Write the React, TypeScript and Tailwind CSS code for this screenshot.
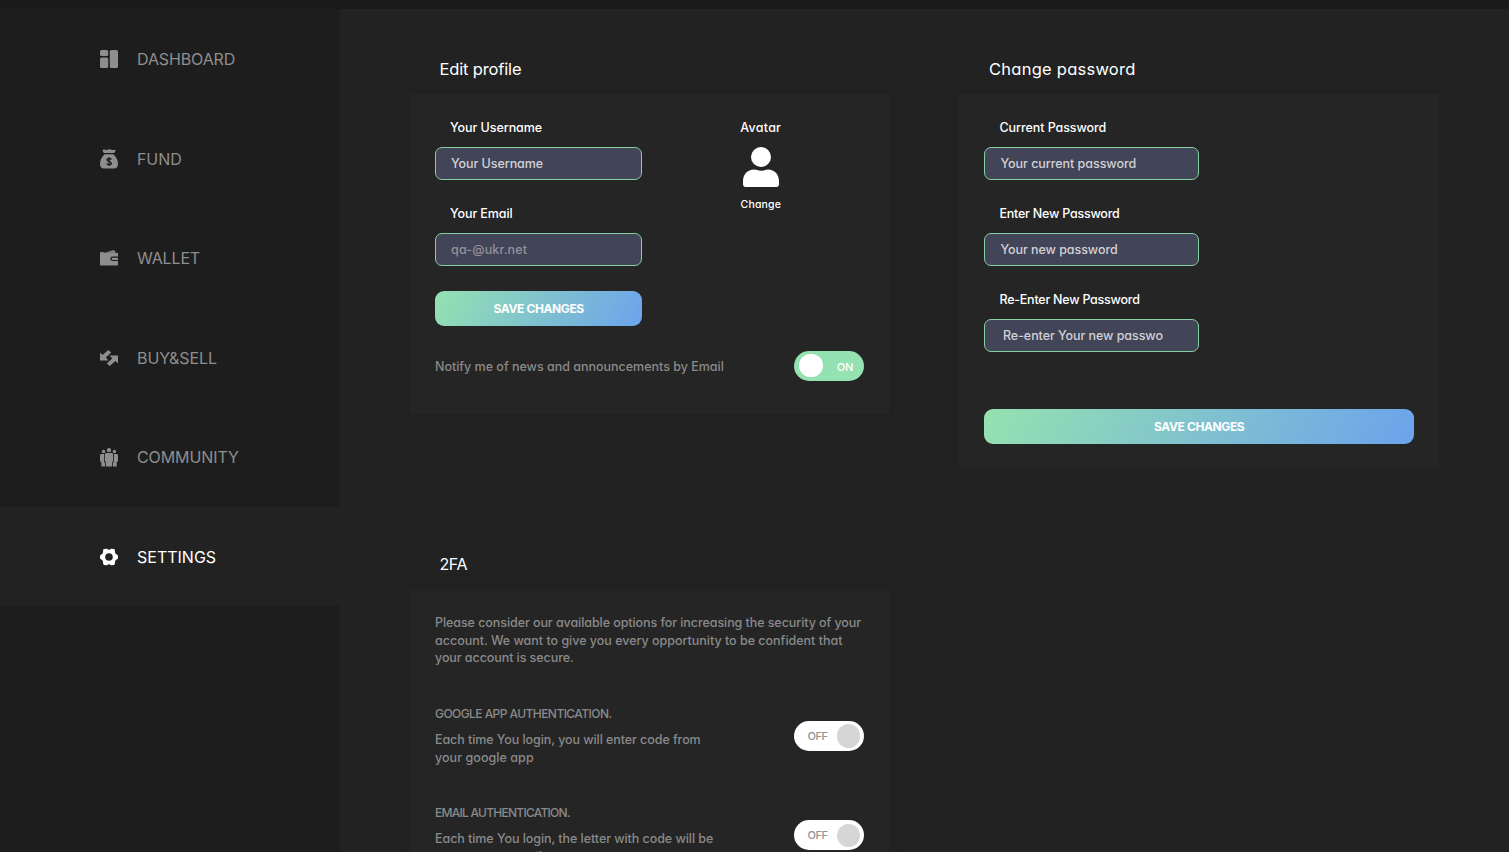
import React from "react";
import clsx from "clsx";

const DashboardIcon = () => (
  <svg width="18" height="18" viewBox="0 0 18 18" fill="currentColor">
    <rect x="0" y="0" width="8.2" height="6" rx="1.6" />
    <rect x="0" y="7.6" width="8.2" height="10.4" rx="1.6" />
    <rect x="9.8" y="0" width="8.2" height="18" rx="1.6" />
  </svg>
);

const FundIcon = () => (
  <svg width="18" height="20" viewBox="0 0 18 20" fill="currentColor">
    <path d="M3.2 0.8C4.5 0 5.6 1.1 6.8.9 8 .6 8.400.3 9.400.3c1 0 1.500.7 2.600.7 1.200 0 2-.6 2.900-.2 1 .5.4 1.500-.1 2.200-.4.6-.7 1-1.500 1H4.700c-.8 0-1.100-.4-1.500-1C2.700 2.300 2.300 1.300 3.200.8z" />
    <path d="M4.600 5.300h8.800C16 7.500 18 11 18 14.800c0 3-1.300 4.800-4 4.800H4c-2.700 0-4-1.800-4-4.800C0 11 2 7.500 4.600 5.300z" />
    <path d="M11.300 10.600c-.4-.8-1.200-1.100-2.200-1.100-1.300 0-2.100.6-2.100 1.500 0 2.100 4.400 1 4.400 3.200 0 1-.9 1.600-2.300 1.600-1.200 0-2.100-.4-2.400-1.300M9.100 8.300v8.700" fill="none" stroke="#1d1d1d" strokeWidth="1.300" />
  </svg>
);

const WalletIcon = () => (
  <svg width="18" height="16" viewBox="0 0 18 16" fill="currentColor">
    <path d="M4.500 2.700 13.200.2c.8-.2 1.400.1 1.700.8l.6 1.700z" />
    <path d="M1.200 1.900 4.600 1.700 2.600 2.700H17c.6 0 1 .4 1 1v2.900h-5.300c-1.500 0-2.400.9-2.400 2.200s.9 2.200 2.400 2.200H18v3.500c0 .6-.4 1-1 1H1c-.6 0-1-.4-1-1V3c0-.6.5-1.100 1.200-1.100z" />
    <path d="M12.900 7.700H18v2.200h-5.100c-.9 0-1.400-.4-1.400-1.100s.5-1.100 1.400-1.100z" />
  </svg>
);

const TradeIcon = () => (
  <svg width="18" height="16" viewBox="0 0 18 16" fill="currentColor">
    <path d="M0 2.600 2.500 5 8.300 0l2.900 2.600-5.400 5 2.600 2.900H0z" />
    <path d="M18 13.400 15.500 11 9.700 16 6.800 13.400l5.400-5-2.600-2.900H18z" />
  </svg>
);

const CommunityIcon = () => (
  <svg width="18" height="19" viewBox="0 0 18 19" fill="currentColor">
    <circle cx="9" cy="2.200" r="2.100" />
    <circle cx="3.600" cy="3.500" r="1.700" />
    <circle cx="14.400" cy="3.500" r="1.700" />
    <path d="M6.500 5h5c1 0 1.600.6 1.600 1.600v6.200c0 .7-.4 1.100-.9 1.300v4.400H5.800v-4.400c-.5-.2-.9-.6-.9-1.300V6.600C4.900 5.600 5.500 5 6.500 5z" />
    <path d="M1.500 6h2.600v7.200c0 .8.300 1.300.9 1.700v3.600H1.300V14C.5 13.700 0 13.200 0 12.400V7.500C0 6.600.6 6 1.500 6z" />
    <path d="M16.500 6h-2.600v7.200c0 .8-.3 1.300-.9 1.700v3.600h3.700V14c.8-.3 1.300-.8 1.300-1.600V7.500c0-.9-.6-1.500-1.500-1.500z" />
  </svg>
);

const SettingsIcon = () => (
  <svg width="18" height="18" viewBox="0 0 18 18">
    <path
      fill="currentColor"
      stroke="currentColor"
      strokeWidth="2"
      strokeLinejoin="round"
      fillRule="evenodd"
      d="M4.200 2 6.400 1.700 9 3.100 11.600 1.700 13.800 2 14.200 5.700 17 8.100V9.900L14.200 12.300 13.800 16 11.600 16.300 9 14.900 6.400 16.300 4.200 16 3.800 12.300 1 9.900V8.100L3.800 5.700zM9 4.200a4.800 4.800 0 1 0 0 9.600 4.800 4.800 0 0 0 0-9.600z"
    />
  </svg>
);

const UserIcon = () => (
  <svg width="36" height="40" viewBox="0 0 36 40" fill="#fff">
    <circle cx="18" cy="10" r="10" />
    <path d="M11 22.600c2.600 0 4 1.200 7 1.200s4.400-1.200 7-1.200c6.500 0 11 5 11 11.600V37c0 2-1.200 3.200-3.200 3.200H3.200C1.200 40.200 0 39 0 37v-2.800C0 27.600 4.500 22.600 11 22.600z" />
  </svg>
);

const nav = [
  { label: "DASHBOARD", Icon: DashboardIcon, track: "tracking-[-0.11px]" },
  { label: "FUND", Icon: FundIcon, track: "tracking-[-0.08px]" },
  { label: "WALLET", Icon: WalletIcon, track: "tracking-[-0.15px]" },
  { label: "BUY&SELL", Icon: TradeIcon, track: "tracking-[-0.07px]" },
  { label: "COMMUNITY", Icon: CommunityIcon, track: "tracking-[-0.1px]" },
  { label: "SETTINGS", Icon: SettingsIcon, track: "tracking-normal", active: true },
];

function Sidebar() {
  return (
    <nav className="w-[340px] shrink-0 bg-[#1d1d1d] pt-[0.2px]">
      {nav.map(({ label, Icon, track, active }) => (
        <a
          key={label}
          className={clsx(
            "flex h-[99.55px] items-center pl-[100px] text-[16px]",
            track,
            active ? "bg-[#222222] text-white" : "text-[#8e8e8e]",
          )}
        >
          <span className="flex w-[18px] justify-center">
            <Icon />
          </span>
          <span className="ml-[19px]">{label}</span>
        </a>
      ))}
    </nav>
  );
}

function Card({ title, track, className, children }: { title: string; track: string; className: string; children: React.ReactNode }) {
  return (
    <section className="w-[479.4px]">
      <h2 className={clsx("mb-[13px] ml-[29.5px] h-6 leading-6 text-white", track)}>{title}</h2>
      <div className={clsx("bg-[#252525] p-[25px] shadow-[0_0_20px_rgba(0,0,0,0.05)]", className)}>{children}</div>
    </section>
  );
}

function Field({ label, value, labelTrack, valueTrack, muted, indent }: { label: string; value: string; labelTrack: string; valueTrack: string; muted?: boolean; indent?: boolean }) {
  return (
    <div className="mb-[25px]">
      <div className={clsx("mb-[10px] h-[18px] pl-[15px] text-[12.5px] leading-[18px] font-medium text-white", labelTrack)}>{label}</div>
      <div
        className={clsx(
          "flex h-[33px] items-center rounded-[7px] border border-[#86cfa2] bg-[#424457] pt-[1.5px] text-[12.5px] font-medium whitespace-nowrap",
          indent ? "pl-[17.5px]" : "pl-[15px]",
          muted ? "text-[#92929c]" : "text-[#d2d2d6]",
          valueTrack,
        )}
      >
        {value}
      </div>
    </div>
  );
}

function SaveButton() {
  return (
    <button className="block h-[35px] w-full rounded-[9px] bg-[linear-gradient(120deg,#95e2b0_0%,#6ba3ec_100%)] text-[12px] font-bold tracking-[-0.38px] text-white">
      SAVE CHANGES
    </button>
  );
}

function Toggle({ on }: { on?: boolean }) {
  return on ? (
    <div className="flex h-[30px] w-[70px] shrink-0 items-center justify-between rounded-full bg-[#94e1b1] pr-[11px] pl-[5px]">
      <span className="mb-px size-[23.5px] rounded-full bg-white" />
      <span className="pt-0.5 text-[11px] font-medium text-white">ON</span>
    </div>
  ) : (
    <div className="flex h-[30px] w-[70px] shrink-0 items-center justify-between rounded-full bg-white pr-[4px] pl-[13px]">
      <span className="pt-px text-[11px] tracking-[-0.4px] text-[#929292]">OFF</span>
      <span className="mt-px size-[23.5px] rounded-full bg-[#d6d6d6]" />
    </div>
  );
}

function AuthOption({ title, titleTrack, lines }: { title: string; titleTrack: string; lines: { text: string; track: string }[] }) {
  return (
    <div className="flex h-[99.5px] items-start justify-between">
      <div>
        <div className={clsx("mb-2 h-[18px] text-[12px] leading-[18px]", titleTrack)}>{title}</div>
        {lines.map((l) => (
          <div key={l.text} className={clsx("leading-[18px]", l.track)}>{l.text}</div>
        ))}
      </div>
      <div className="mt-4">
        <Toggle />
      </div>
    </div>
  );
}

export default function App() {
  return (
    <div className="flex h-[852px] w-full flex-col overflow-hidden bg-[#222222] font-['Inter','Liberation_Sans',sans-serif]">
      <header className="h-[9px] shrink-0 bg-[#1a1a1a]" />
      <div className="flex min-h-0 flex-1">
        <Sidebar />
        <main className="flex flex-1 flex-col pt-12 pl-[70px] [font-feature-settings:'cv11']">
          <div className="flex h-[495px] shrink-0 items-start gap-[70.1px]">
            <Card title="Edit profile" track="text-[16.5px] tracking-[-0.15px]" className="h-[320px]">
              <div className="flex">
                <div className="w-[207.4px]">
                  <Field label="Your Username" value="Your Username" labelTrack="tracking-[-0.06px]" valueTrack="tracking-[-0.06px]" />
                  <Field label="Your Email" value="qa-@ukr.net" labelTrack="tracking-[-0.1px]" valueTrack="tracking-[0.15px]" muted />
                  <SaveButton />
                </div>
                <div className="ml-[83.4px] flex w-[70px] flex-col items-center font-medium text-white">
                  <div className="h-[18px] text-[12.5px] leading-[18px] tracking-[0.25px]">Avatar</div>
                  <div className="mt-[10px]">
                    <UserIcon />
                  </div>
                  <div className="mt-[10px] text-[10.5px] leading-4 tracking-[0.15px]">Change</div>
                </div>
              </div>
              <div className="mt-[25px] flex items-center justify-between text-[12.5px] font-medium text-[#8a8a8a]">
                <span className="pt-[2.5px] tracking-[-0.01px]">Notify me of news and announcements by Email</span>
                <Toggle on />
              </div>
            </Card>
            <Card title="Change password" track="text-[16.5px] tracking-[0.25px]" className="h-[375px]">
              <div className="w-[215px]">
                <Field label="Current Password" value="Your current password" labelTrack="tracking-[-0.07px]" valueTrack="tracking-[-0.04px]" />
                <Field label="Enter New Password" value="Your new password" labelTrack="tracking-[-0.23px]" valueTrack="tracking-[-0.06px]" />
                <Field label="Re-Enter New Password" value="Re-enter Your new passwo" labelTrack="tracking-[-0.24px]" valueTrack="tracking-[-0.06px]" indent />
              </div>
              <div className="mt-[57px]">
                <SaveButton />
              </div>
            </Card>
          </div>
          <Card title="2FA" track="text-[16px] tracking-[-0.4px]" className="h-[500px]">
            <div className="text-[12.5px] font-medium text-[#8a8a8a]">
              <div className="h-[90.5px] leading-[17.7px] whitespace-nowrap">
                <div className="tracking-[-0.07px]">Please consider our available options for increasing the security of your</div>
                <div className="tracking-[-0.01px]">account. We want to give you every opportunity to be confident that</div>
                <div className="tracking-[-0.07px]">your account is secure.</div>
              </div>
              <AuthOption
                title="GOOGLE APP AUTHENTICATION."
                titleTrack="tracking-[-0.56px]"
                lines={[
                  { text: "Each time You login, you will enter code from", track: "tracking-[-0.07px]" },
                  { text: "your google app", track: "tracking-[0.06px]" },
                ]}
              />
              <AuthOption
                title="EMAIL AUTHENTICATION."
                titleTrack="tracking-[-0.74px]"
                lines={[
                  { text: "Each time You login, the letter with code will be", track: "tracking-[-0.06px]" },
                  { text: "sent to your email", track: "tracking-[0px]" },
                ]}
              />
            </div>
          </Card>
        </main>
      </div>
    </div>
  );
}
